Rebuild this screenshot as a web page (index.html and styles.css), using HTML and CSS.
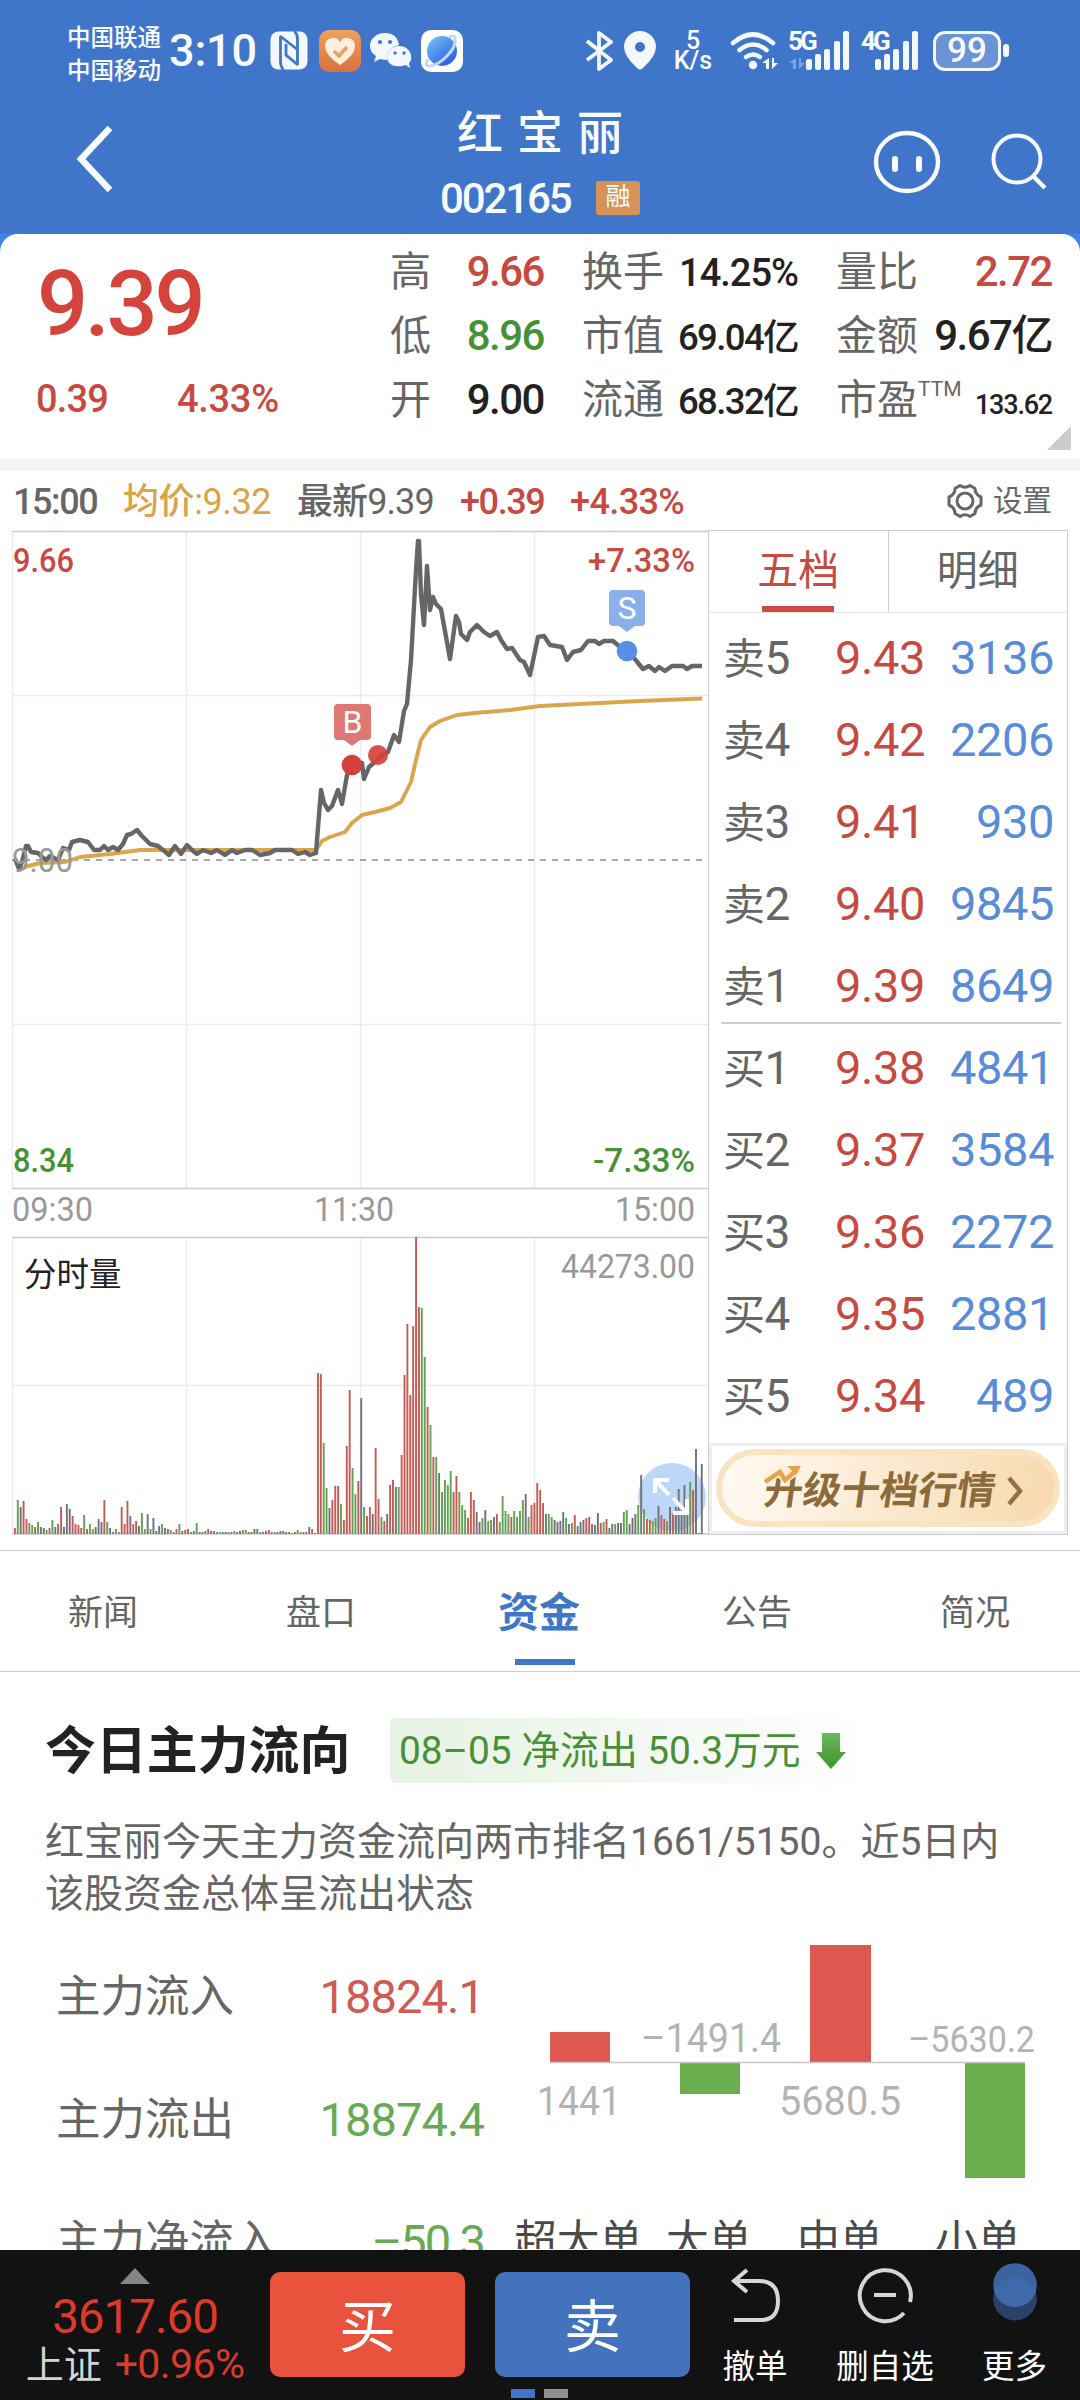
FILE: index.html
```html
<!DOCTYPE html>
<html lang="zh-CN">
<head>
  <meta charset="UTF-8">
  <title>红宝丽 002165</title>
  <meta name="viewport" content="width=1080">
  <link rel="stylesheet" href="styles.css">
</head>
<body>
<div class="app">
  <header class="header">
    <div class="status">
      <div class="carriers"><span>中国联通</span><span>中国移动</span></div>
      <div class="clock">3:10</div>
      <svg class="ic-nfc" width="38" height="39" viewBox="0 0 38 39">
        <rect x=".5" y=".5" width="37" height="38" rx="8" fill="#f3f8ff"/>
        <path d="M10.500 5v26q0 5 3 8M10 5L28 19M27.500 34V8q0-5-3-8M28 34L16 24V13" fill="none" stroke="#4076ca" stroke-width="2.800"/>
      </svg>
      <svg class="ic-heart" width="42" height="42" viewBox="0 0 42 42">
        <defs><linearGradient id="og" x2="0" y2="1"><stop stop-color="#efa15f"/><stop offset="1" stop-color="#d9713f"/></linearGradient></defs>
        <rect width="42" height="42" rx="10" fill="url(#og)"/>
        <path d="M21 35Q6 25 6 16a8 8 0 0 1 15-4a8 8 0 0 1 15 4q0 9-15 19z" fill="#fdf0e0"/>
        <path d="M15 21l5 5 8-9" fill="none" stroke="#e8a35f" stroke-width="3.5"/>
      </svg>
      <svg class="ic-chat" width="42" height="36" viewBox="0 0 42 36">
        <path d="M15 0C6 0 0 6 0 13q0 6 6 10l-2 6 6-3q4 1 7 1-1-12 12-15Q27 0 15 0z" fill="#f3f8ff"/>
        <path d="M29 13c-7 0-12 5-12 11s6 12 19 8l4 3-1-5q3-3 2-7c0-5-5-10-12-10z" fill="#f3f8ff"/>
        <g fill="#4076ca"><circle cx="10" cy="9" r="2"/><circle cx="20" cy="9" r="2"/><circle cx="25" cy="20" r="1.7"/><circle cx="34" cy="20" r="1.7"/></g>
      </svg>
      <svg class="ic-planet" width="42" height="42" viewBox="0 0 42 42">
        <defs><linearGradient id="pg" x2=".8" y2="1"><stop stop-color="#78c8f8"/><stop offset="1" stop-color="#2b57e0"/></linearGradient></defs>
        <rect width="42" height="42" rx="10" fill="#fff"/>
        <circle cx="21" cy="21" r="15" fill="url(#pg)"/>
        <path d="M7 29q-4 7 1 7 8 0 18-10T34 7q-2-2-6 0" fill="none" stroke="#c5d8fa" stroke-width="3"/>
      </svg>
      <div class="status-right">
        <svg width="27" height="40" viewBox="0 0 27 40"><path d="M1 10l24 19-12 9V2l12 9L1 29" fill="none" stroke="#f3f8ff" stroke-width="3.8" stroke-linejoin="round"/></svg>
        <svg class="ic-pin" width="32" height="39" viewBox="0 0 32 39"><path fill="#f3f8ff" fill-rule="evenodd" d="M16 0a16 16 0 0 1 16 16q0 9-13 21-3 3-6 0Q0 25 0 16A16 16 0 0 1 16 0zm0 11a5 5 0 1 0 0 10 5 5 0 0 0 0-10z"/></svg>
        <div class="speed"><span>5</span><span>K/s</span></div>
        <svg class="ic-wifi" width="49" height="38" viewBox="0 0 49 38">
          <g fill="none" stroke="#f3f8ff" stroke-width="4.6" stroke-linecap="round"><path d="M3 11Q23-6 43 11"/><path d="M9.500 18Q23 7 36.500 18"/><path d="M16 25q7-5 14 0"/></g>
          <circle cx="23" cy="33" r="4.200" fill="#f3f8ff"/>
          <path d="M39 26v11h-3v-6h-4zM42 37V26h2v5h4z" fill="#f3f8ff"/>
        </svg>
        <div class="signal">
          <span>5G</span>
          <svg width="62" height="39" viewBox="0 0 62 39"><path d="M8 27v11H5v-6H1zM11 38V27h2v5h4z" fill="#7fa4e2"/><g fill="#f3f8ff"><rect x="18" y="28" width="6" height="11" rx="2"/><rect x="27" y="23" width="6" height="16" rx="2"/><rect x="36" y="18" width="6" height="21" rx="2"/><rect x="46" y="10" width="6" height="29" rx="2"/><rect x="55" y="0" width="6" height="39" rx="2"/></g></svg>
        </div>
        <div class="signal">
          <span>4G</span>
          <svg width="58" height="39" viewBox="4 0 58 39"><g fill="#f3f8ff"><rect x="18" y="28" width="6" height="11" rx="2"/><rect x="27" y="23" width="6" height="16" rx="2"/><rect x="36" y="18" width="6" height="21" rx="2"/><rect x="46" y="10" width="6" height="29" rx="2"/><rect x="55" y="0" width="6" height="39" rx="2"/></g></svg>
        </div>
        <div class="battery">99</div><i class="nub"></i>
      </div>
    </div>
    <div class="nav">
      <svg class="back" width="40" height="70" viewBox="0 0 40 70"><path d="M35 4L6 35l29 31" fill="none" stroke="#f8fcff" stroke-width="6.5"/></svg>
      <div class="titles">
        <h1>红宝丽</h1>
        <div class="code"><span class="num">002165</span><em>融</em></div>
      </div>
      <svg class="face" width="68" height="64" viewBox="0 0 68 64"><ellipse cx="34" cy="32" rx="31" ry="29" fill="none" stroke="#f8fcff" stroke-width="4.400"/><path d="M22 29v10M46 29v10" stroke="#f8fcff" stroke-width="6" stroke-linecap="round"/></svg>
      <svg class="search" width="58" height="58" viewBox="0 0 58 58"><circle cx="27" cy="27" r="23.500" fill="none" stroke="#f8fcff" stroke-width="4"/><path d="M43 44l12 12" stroke="#f8fcff" stroke-width="4.400"/></svg>
    </div>
  </header>

  <section class="quote-wrap">
    <div class="quote">
      <div class="price">
        <strong class="num">9.39</strong>
        <div class="chg num"><span>0.39</span><span>4.33%</span></div>
      </div>
      <div class="stats">
        <div class="stat"><label>高</label><b class="up">9.66</b></div>
        <div class="stat"><label>换手</label><b class="m wide">14.25%</b></div>
        <div class="stat"><label>量比</label><b class="up">2.72</b></div>
        <div class="stat"><label>低</label><b class="down">8.96</b></div>
        <div class="stat"><label>市值</label><b class="m">69.04亿</b></div>
        <div class="stat"><label>金额</label><b>9.67亿</b></div>
        <div class="stat"><label>开</label><b>9.00</b></div>
        <div class="stat"><label>流通</label><b class="m">68.32亿</b></div>
        <div class="stat"><label>市盈<sup>TTM</sup></label><b class="s">133.62</b></div>
      </div>
      <i class="corner"></i>
    </div>
  </section>

  <div class="info">
    <span class="i1">15:00</span>
    <span class="i2 avg">均价:9.32</span>
    <span class="i3">最新9.39</span>
    <span class="i4 up">+0.39</span>
    <span class="i5 up">+4.33%</span>
    <div class="setting">
      <svg width="38" height="38" viewBox="0 0 38 38"><path d="M14 3.500q5 3.500 10 0l5 3q0 6 6 8.500v8q-6 2.500-6 8.500l-5 3q-5-3.500-10 0l-5-3q0-6-6-8.500v-8q6-2.500 6-8.500z" fill="none" stroke="#666" stroke-width="3" stroke-linejoin="round"/><circle cx="19" cy="19" r="8" fill="none" stroke="#666" stroke-width="3"/></svg>
      设置
    </div>
  </div>

  <main class="board">
    <svg class="chart" width="708" height="1005" viewBox="0 530 708 1005">
      <g class="grid">
        <path d="M12.500 531V1188M186.500 531V1188M360.500 531V1188M534.500 531V1188M12 695.500H708M12 1024.500H708"/>
        <path d="M12.500 1238V1534M186.500 1238V1534M360.500 1238V1534M534.500 1238V1534M12 1385.500H708"/>
      </g>
      <path class="frame" d="M12 531.500H708M12 1188.500H708M12 1237.500H708M12 1534H708"/>
      <path d="M12 860H703" stroke="#8a8a8a" stroke-width="1.600" stroke-dasharray="6 6"/>
      <polyline class="avg-line" points="19,870 28,866 40,863 65,862 80,857 110,854 140,850 180,850 316,850 322,841 330,837 345,832 352,823 362,815 375,812 390,808 401,802 411,782 416,760 421,740 430,727 440,721 457,715 475,713 510,710 540,706 580,704 640,701 702,698.500"/>
      <polyline class="price-line" points="15,859 19,869 22,862 26,846 28,846 31,852 38,853 42,857 46,860 50,856 58,860 63,848 69,850 72,842 80,840 88,842 94,850 100,850 104,846 108,850 113,847 118,850 123,844 127,835 131,834 137,830 142,836 150,844 158,846 163,850 169,855 175,846 181,854 187,845 192,850 197,854 203,850 211,853 217,850 225,855 232,850 237,853 245,850 252,850 260,855 270,853 275,850 292,850 298,854 305,852 310,855 316,853 317,840 321,790 324,803 328,810 332,806 338,790 342,804 347,775 352,765 357,764 362,763 364,779 369,767 376,761 382,755 388,752 394,735 399,742 404,711 407,704 411,660 416,570 418,541 419,541 421,595 424,625 427,566 430,610 433,597 436,604 441,609 450,659 456,616 459,622 461,634 467,640 470,632 477,625 484,632 490,636 497,632 501,640 507,649 512,648 520,660 524,662 530,675 538,637 544,636 550,645 562,647 567,660 573,652 581,650 588,641 595,641 599,644 604,641 613,641 620,647 627,651 634,658 643,669 649,666 655,671 659,667 665,671 672,666 683,666 687,669 692,666 702,666"/>
      <circle cx="378" cy="755" r="10" fill="#d5443c" opacity=".93"/>
      <circle cx="352" cy="765" r="10.300" fill="#d4403a"/>
      <circle cx="627" cy="651" r="10.300" fill="#588fe6"/>
      <path d="M338 704h29q4 0 4 4v28q0 4-4 4h-7l-8 6-8-6h-6q-4 0-4-4v-28q0-4 4-4z" fill="#df7773"/>
      <path d="M613 590h28q4 0 4 4v28q0 4-4 4h-6l-8 6-8-6h-6q-4 0-4-4v-28q0-4 4-4z" fill="#8ab0ec"/>
      <text class="tag" x="352.500" y="732.500">B</text>
      <text class="tag" x="627" y="619">S</text>

      <g class="lbl">
        <text class="up" x="13" y="572" textLength="61" lengthAdjust="spacingAndGlyphs">9.66</text>
        <text class="up" x="588" y="572" textLength="107" lengthAdjust="spacingAndGlyphs">+7.33%</text>
        <text class="down" x="13" y="1172" textLength="61" lengthAdjust="spacingAndGlyphs">8.34</text>
        <text class="down" x="593" y="1172" textLength="102" lengthAdjust="spacingAndGlyphs">-7.33%</text>
        <g class="dim">
          <text x="12" y="872" textLength="61" lengthAdjust="spacingAndGlyphs">9.00</text>
          <text x="12" y="1221" textLength="81" lengthAdjust="spacingAndGlyphs">09:30</text>
          <text x="314" y="1221" textLength="80" lengthAdjust="spacingAndGlyphs">11:30</text>
          <text x="615" y="1221" textLength="80" lengthAdjust="spacingAndGlyphs">15:00</text>
          <text x="561" y="1278" textLength="134" lengthAdjust="spacingAndGlyphs">44273.00</text>
        </g>
        <text class="vol-title" x="24" y="1286">分时量</text>
      </g>
      <circle cx="672" cy="1497" r="34" fill="#a5caf7" opacity=".75"/>
      <g id="volume"></g>
      <path d="M655 1493v-13h14M657 1482l12 13M687 1499v14h-14M685 1511l-12-13" fill="none" stroke="#fff" stroke-width="4"/>
    </svg>

    <aside class="book">
      <div class="book-tabs"><span class="on">五档</span><span>明细</span></div>
      <div class="levels">
        <div class="lv"><span>卖<u>5</u></span><b>9.43</b><i>3136</i></div>
        <div class="lv"><span>卖<u>4</u></span><b>9.42</b><i>2206</i></div>
        <div class="lv"><span>卖<u>3</u></span><b>9.41</b><i>930</i></div>
        <div class="lv"><span>卖<u>2</u></span><b>9.40</b><i>9845</i></div>
        <div class="lv last"><span>卖<u>1</u></span><b>9.39</b><i>8649</i></div>
        <div class="lv"><span>买<u>1</u></span><b>9.38</b><i>4841</i></div>
        <div class="lv"><span>买<u>2</u></span><b>9.37</b><i>3584</i></div>
        <div class="lv"><span>买<u>3</u></span><b>9.36</b><i>2272</i></div>
        <div class="lv"><span>买<u>4</u></span><b>9.35</b><i>2881</i></div>
        <div class="lv"><span>买<u>5</u></span><b>9.34</b><i>489</i></div>
      </div>
      <div class="upgrade">
        <div class="pill">
          <span>升级十档行情</span>
          <svg class="pill-arrow" width="18" height="30" viewBox="0 0 18 30"><path d="M3 2l11 13L3 28" fill="none" stroke="#94703f" stroke-width="4.500"/></svg>
          <svg class="trend" width="44" height="26" viewBox="0 0 44 26"><path d="M1 17L17 6l5 7L36 4" fill="none" stroke="#fdf0dc" stroke-width="11"/><path d="M2 18l15-10 5 8L34 6" fill="none" stroke="#e5a14c" stroke-width="4.500"/><path d="M24 2h14l-5 9z" fill="#e5a14c"/></svg>
        </div>
      </div>
    </aside>
  </main>

  <nav class="tabs">
    <span>新闻</span><span>盘口</span><span class="on">资金</span><span>公告</span><span>简况</span>
  </nav>

  <section class="flow">
    <div class="flow-head">
      <h2>今日主力流向</h2>
      <div class="chip">
        <span>08–05 净流出 50.3万元</span>
        <svg width="30" height="36" viewBox="0 0 30 36"><defs><linearGradient id="ag" x2="0" y2="1"><stop stop-color="#6db862"/><stop offset="1" stop-color="#3d9428"/></linearGradient></defs><path d="M6 0h18v19h6L15 36 0 19h6z" fill="url(#ag)"/></svg>
      </div>
    </div>
    <p>红宝丽今天主力资金流向两市排名1661/5150。近5日内该股资金总体呈流出状态</p>
    <div class="flow-body">
      <div class="flow-rows">
        <div><span>主力流入</span><b class="in">18824.1</b></div>
        <div><span>主力流出</span><b class="out">18874.4</b></div>
        <div><span>主力净流入</span><b class="out net">–50.3</b></div>
      </div>
      <svg class="bars" width="560" height="320" viewBox="500 1930 560 320">
        <rect x="550" y="2033" width="60" height="30" fill="#dd5850"/>
        <rect x="680" y="2063" width="60" height="32" fill="#6aae50"/>
        <rect x="810" y="1946" width="61" height="117" fill="#dd5850"/>
        <rect x="965" y="2063" width="60" height="116" fill="#6aae50"/>
        <path d="M550 2063.500H1025" stroke="#c4c4c4" stroke-width="1.500"/>
        <g class="bar-num">
          <text x="537" y="2116" textLength="84" lengthAdjust="spacingAndGlyphs">1441</text>
          <text x="641" y="2053" textLength="140" lengthAdjust="spacingAndGlyphs">–1491.4</text>
          <text x="779" y="2116" textLength="122" lengthAdjust="spacingAndGlyphs">5680.5</text>
          <text class="sm" x="908" y="2053" textLength="127" lengthAdjust="spacingAndGlyphs">–5630.2</text>
        </g>
        <g class="bar-cat">
          <text x="514" y="2257">超大单</text>
          <text x="666" y="2257">大单</text>
          <text x="797" y="2257">中单</text>
          <text x="935" y="2257">小单</text>
        </g>
      </svg>
    </div>
  </section>

  <footer class="bottom">
    <div class="index">
      <i class="tri"></i>
      <div class="idx-val">3617.60</div>
      <div class="idx-chg"><span>上证</span>+0.96%</div>
    </div>
    <button class="buy">买</button>
    <button class="sell">卖</button>
    <div class="act a1">
      <svg width="60" height="60" viewBox="0 0 60 60"><path d="M22 5L9 16l13 11M9 16h25q19 0 19 20t-19 19H9" fill="none" stroke="#d6d6d6" stroke-width="4"/></svg>
      <span>撤单</span>
    </div>
    <div class="act a2">
      <svg width="60" height="60" viewBox="0 0 60 60"><path d="M55 37A25.500 25.500 0 1 0 49 48M19 30h22" fill="none" stroke="#d6d6d6" stroke-width="4"/></svg>
      <span>删自选</span>
    </div>
    <div class="act a3">
      <svg width="60" height="66" viewBox="0 0 60 66"><circle cx="30" cy="37" r="24" fill="#2a4268"/><circle cx="30" cy="22" r="24" fill="#3a639f"/><path d="M7.200 29.500a24 24 0 0 1 45.600 0a24 24 0 0 1-45.600 0z" fill="#3f69a9"/></svg>
      <span>更多</span>
    </div>
    <div class="pager"><i></i><i></i></div>
  </footer>
</div>
<script src="script.js"></script>
</body>
</html>
```

FILE: styles.css
```css
* { box-sizing: border-box; }
body {
  margin: 0; background: #fff; color: #666;
  font-family: Roboto, "Noto Sans CJK SC", sans-serif;
}
i, em { font-style: normal; }
u { text-decoration: none; }
h1, h2, p { margin: 0; font-weight: normal; }
svg { display: block; flex: none; }
.app { width: 1080px; height: 2400px; overflow: hidden; display: flex; flex-direction: column; }
.app > * { flex: none; }
.up { color: #c64a42; fill: #c64a42; }
.down { color: #479035; fill: #479035; }

/* header */
.header { height: 234px; background: #4076ca; color: #f8fcff; }
.status { display: flex; height: 96px; padding: 14px 71px 0 67px; align-items: center; }
.carriers { display: flex; flex-direction: column; width: 96px; font-size: 23.5px; font-weight: 500; line-height: 33px; }
.clock { width: 100px; padding-left: 6px; font-size: 45px; font-weight: 500; letter-spacing: -.2px; line-height: 60px; margin-top: -8px; }
.status > svg { margin-top: -9px; }
.ic-nfc { margin-left: 7px; }
.ic-heart { margin-left: 11px; }
.ic-chat { margin-left: 9px; }
.ic-planet { margin-left: 9px; }
.status-right { display: flex; align-items: center; margin-left: auto; margin-top: -9px; height: 40px; }
.ic-pin { margin-left: 11px; }
.speed { display: flex; flex-direction: column; align-items: center; margin-left: 15px; width: 44px; font-size: 25px; font-weight: 500; line-height: 20px; }
.ic-wifi { margin-left: 15px; }
.signal { position: relative; margin-left: 9px; }
.signal span { position: absolute; left: 0; top: -3px; font-size: 26px; line-height: 26px; font-weight: 700; letter-spacing: -3px; }
.signal + .signal { margin-left: 11px; }
.battery {
  margin-left: 14px; width: 68px; height: 40px; border: 3.5px solid #f3f8ff; border-radius: 12px;
  background: #6c93d6; font-size: 35px; font-weight: 500; line-height: 34px; text-align: center;
}
.nub { width: 6px; height: 13px; margin-left: 2px; border-radius: 3px; background: #f3f8ff; }
.nav { display: flex; height: 138px; padding-left: 75px; align-items: flex-start; }
.back { margin-top: 28px; }
.titles { margin-left: 309px; width: 240px; padding-left: 16px; }
.titles h1 { padding-left: 17px; font-size: 46px; font-weight: 500; letter-spacing: 14px; line-height: 60px; margin-top: 7px; white-space: nowrap; }
.code { display: flex; align-items: center; height: 50px; margin-top: 11px; font-size: 42px; font-weight: 500; line-height: 50px; }
.code .num { width: 156px; letter-spacing: -2.1px; }
.code em { width: 44px; height: 34px; border-radius: 3px; background: #d69355; font-size: 25px; font-weight: 400; line-height: 32px; text-align: center; margin-top: -2px; }
.face { margin-left: 209px; margin-top: 34px; }
.search { margin-left: 49px; margin-top: 36px; }

/* quote */
.quote-wrap { background: #3d80ee; border-bottom: 12px solid #f4f4f4; }
.quote { position: relative; display: flex; height: 225px; background: #fff; border-radius: 18px 18px 0 0; }
.price { width: 390px; padding-left: 37px; color: #d5443c; }
.price strong { display: block; font-size: 90px; font-weight: 500; line-height: 106px; margin-top: 18px; letter-spacing: -3.3px; }
.chg { display: flex; margin-top: 19px; font-size: 38px; line-height: 44px; color: #c64a42; letter-spacing: -.8px; font-weight: 500; }
.chg span { width: 142px; margin-left: -1px; }
.chg span + span { letter-spacing: -.3px; }
.stats { display: grid; grid-template-columns: 154px 216px 216px; column-gap: 38px; grid-template-rows: repeat(3, 64px); padding-top: 6px; }
.stat { display: flex; justify-content: space-between; align-items: baseline; white-space: nowrap; line-height: 64px; }
.stat label { font-size: 41px; }
.stat b { font-size: 42px; font-weight: 500; letter-spacing: -1.5px; }
.stat b:not(.up):not(.down) { color: #222; }
.stat b.m { font-size: 36.5px; letter-spacing: -1.6px; }
.stat b.wide { font-size: 38px; letter-spacing: -1px; }
.stat b.s { font-size: 27px; letter-spacing: -1.2px; }
.stat sup { font-size: 21px; line-height: 0; vertical-align: 18px; }
.corner { position: absolute; right: 9px; bottom: 9px; border-left: 24px solid transparent; border-bottom: 24px solid #ccc; }

/* info line */
.info { display: flex; height: 59px; padding-left: 13px; line-height: 62px; font-size: 36px; font-weight: 500; letter-spacing: -1.4px; white-space: nowrap; }
.info .i1 { width: 110px; }
.info .i2 { width: 174px; letter-spacing: -.4px; font-weight: 450; }
.info .i3 { width: 163px; letter-spacing: -.9px; font-weight: 450; }
.info .i4 { width: 110px; }
.info .i5 { letter-spacing: -.6px; }
.info .avg { color: #d9a348; }
.setting { display: flex; align-items: center; gap: 9px; margin: 0 28px 0 auto; font-size: 29.5px; font-weight: 400; letter-spacing: 0; height: 60px; }

/* chart */
.board { display: flex; height: 1005px; }
.grid { fill: none; stroke: #ececec; stroke-width: 1.5; }
.frame { fill: none; stroke: #ccc; stroke-width: 1.3; }
.avg-line { fill: none; stroke: #d9a64c; stroke-width: 3.9; stroke-linejoin: round; }
.price-line { fill: none; stroke: #666; stroke-width: 4.4; stroke-linejoin: round; }
.tag { font-size: 32px; fill: #fff; text-anchor: middle; }
.lbl { font-size: 33.5px; font-weight: 500; }
.dim { fill: #999; font-weight: 400; }
.vol-title { font-size: 32.5px; font-weight: 400; fill: #222; }
#volume .r { fill: #c75a54; }
#volume .g { fill: #62a052; }
#volume .k { fill: #6f7376; }

/* order book */
.book { width: 360px; border: 1.5px solid #ccc; display: flex; flex-direction: column; }
.book-tabs { display: flex; height: 82px; border-bottom: 1px solid #e8e8e8; font-size: 41px; line-height: 80px; }
.book-tabs span { flex: 1; text-align: center; position: relative; }
.book-tabs .on { color: #c64a42; border-right: 1px solid #ccc; }
.book-tabs .on::after { content: ""; position: absolute; left: 53px; bottom: 0; width: 72px; height: 6px; background: #d04840; }
.levels { padding: 4px 6px 0 12px; }
.lv { display: grid; grid-template-columns: 92px 113px 1fr; padding: 0 7px 0 2px; height: 82px; line-height: 82px; font-size: 47px; white-space: nowrap; letter-spacing: -.4px; }
.lv.last { height: 79px; margin-bottom: 3px; border-bottom: 2px solid #ccc; }
.lv span { font-size: 42px; }
.lv u { font-size: 46px; }
.lv b { font-weight: 400; color: #c64a42; padding-left: 20px; }
.lv i { color: #588cd8; text-align: right; }
.upgrade { margin: auto 0 0; border: 3px solid #eee; height: 91px; padding: 3px 4px; }
.pill {
  position: relative; display: flex; align-items: center; height: 78px; border-radius: 39px; padding-left: 43px;
  background: linear-gradient(100deg, #fffaf3, #f9e3c3 70%, #f7d9ad); border: 6px solid #fae3c1;
  color: #8d6a3a; font-size: 38.5px; font-weight: 700; white-space: nowrap;
}
.pill span { transform: skewX(-8deg); line-height: 60px; padding-top: 6px; }
.pill-arrow { margin: 5px 0 0 10px; }
.trend { position: absolute; left: 41px; top: 9px; }

/* tabs */
.tabs { display: flex; margin-top: 15px; height: 122px; border-top: 1.5px solid #ccc; border-bottom: 1.5px solid #ccc; font-size: 35px; line-height: 125px; }
.tabs span { width: 218px; text-align: center; flex: none; position: relative; }
.tabs span:first-child { margin-left: -6px; }
.tabs .on { color: #4076c6; font-size: 41px; font-weight: 700; }
.tabs .on::after { content: ""; position: absolute; left: 85px; bottom: 6px; width: 60px; height: 6px; background: #4076c6; }

/* capital flow */
.flow { height: 578px; overflow: hidden; }
.flow-head { display: flex; align-items: center; padding: 45px 0 0 45px; }
.flow-head h2 { width: 345px; font-size: 50.9px; font-weight: 700; line-height: 65px; color: #222; padding-top: 2px; }
.chip {
  display: flex; align-items: center; gap: 15px; width: 465px; height: 65px; padding-left: 9px; border-radius: 6px;
  background: linear-gradient(90deg, #e6f2e3, #fdfefd); color: #479035; font-size: 38.8px; line-height: 68px; white-space: nowrap;
}
.flow p { margin: 32px 0 0 45px; width: 990px; font-size: 39px; line-height: 52px; }
.flow-body { display: flex; }
.flow-rows { width: 500px; padding: 16px 16px 0 56px; }
.flow-rows div { display: flex; justify-content: space-between; height: 122.5px; line-height: 122px; font-size: 44.5px; }
.flow-rows b { font-weight: 400; font-size: 47px; letter-spacing: -.9px; }
.flow-rows .net { letter-spacing: -2px; }
.in { color: #cf5b53; }
.out { color: #68a953; }
.bars { margin-top: 9px; }
.bar-num { fill: #b3b3b3; font-size: 41px; }
.bar-num .sm { font-size: 37px; }
.bar-cat { fill: #4a4a4a; font-size: 42.8px; }

/* bottom bar */
.bottom { position: relative; display: flex; height: 150px; background: #121212; color: #fff; }
.index { width: 270px; display: flex; flex-direction: column; align-items: center; color: #dc3a2b; }
.tri { margin-top: 18px; border: 15px solid transparent; border-top: 0; border-bottom: 16px solid #878484; }
.idx-val { font-size: 47.5px; line-height: 56px; margin-top: 5px; letter-spacing: -1px; }
.idx-chg { font-size: 41px; line-height: 44px; letter-spacing: -.6px; margin-top: -3px; white-space: nowrap; }
.idx-chg span { color: #d4d4d4; font-size: 38px; letter-spacing: 0; margin-right: 13px; }
.bottom button { margin: 22px 30px 0 0; width: 195px; height: 105px; border: 0; border-radius: 10px; padding: 0 0 6px; color: #fff; font-family: inherit; font-size: 57px; }
.buy { background: #e9533e; }
.sell { background: #4273bc; }
.act { display: flex; flex-direction: column; align-items: center; font-size: 32.5px; line-height: 40px; white-space: nowrap; padding-top: 15px; }
.act svg { height: 60px; overflow: visible; }
.act span { margin-top: 22px; }
.a1 { width: 130px; margin-left: -30px; }
.a2 { width: 130px; }
.a3 { width: 129px; }
.pager { position: absolute; left: 511px; top: 139px; display: flex; gap: 9px; }
.pager i { width: 24px; height: 9px; background: #4076ca; }
.pager i + i { background: #8f8f8f; }
```

FILE: script.js
```js
// 分时成交量: r 涨 / g 跌 / k 平, 数字为柱高
const vol = `r6 g34 k27 r33 r15 g11 g9 r7 g12 k7 k6 g4 r6 g14 k7 k10 r27 k7 k30 k25 r18 r10 r9 r6
g19 r5 g10 g5 k7 k15 k12 r34 g12 k6 r2 g5 g2 r27 r10 r33 k18 r10 r13 k8 g21 g5 k20 g5 k16 k3 k8 g10
k6 k5 g4 r2 r5 g10 k3 r4 r5 g2 k3 g11 r2 k2 g3 r5 k3 k3 g2 g2 k2 k2 g2 r2 g3 k2 k3 g4 g4 r2 k2 k5
k5 g2 r2 k3 r4 g2 g2 k2 k3 k3 k2 r2 k1 k2 g4 g2 r2 r2 k7 r5 k1 r161 r160 g91 g46 k26 r34 r48 r48
g30 r14 r88 r144 g66 g40 r53 k136 g27 r18 r27 k20 r86 r35 g17 r13 k20 r49 r54 k47 g47 r79 r159 r210
r139 r208 r297 r227 g226 g177 r127 g109 r77 g77 k61 g42 g54 g49 g63 r42 r58 g42 g29 g24 r16 r42 r34
k22 k12 g16 k24 g13 g14 k17 r20 g12 g38 g23 g20 r17 g23 g17 g23 g34 k40 g17 r29 r31 r51 r44 r31 k20
g20 g17 k14 k12 k13 k22 g16 k10 g11 r19 k8 k12 k14 r16 r17 k10 k9 k21 r11 g12 r15 k6 k10 g10 k11 k11
g22 g24 k10 k16 k20 g29 k59 g25 r15 r14 g13 g16 k28 r19 r15 g13 k27 r20 k27 k45 k27 k49 k35 g52 r44
k85 k1 k70`.split(/\s+/);

const g = document.getElementById('volume');
const bottom = 1534;
// 最高柱对齐到 x = 416
const peak = vol.indexOf('r297');
const step = 2.886;
vol.forEach((v, i) => {
  const h = +v.slice(1);
  const bar = document.createElementNS('http://www.w3.org/2000/svg', 'rect');
  bar.setAttribute('class', v[0]);
  bar.setAttribute('x', (415.1 + (i - peak) * step).toFixed(2));
  bar.setAttribute('y', bottom - h);
  bar.setAttribute('width', 1.9);
  bar.setAttribute('height', h);
  g.appendChild(bar);
});
```
